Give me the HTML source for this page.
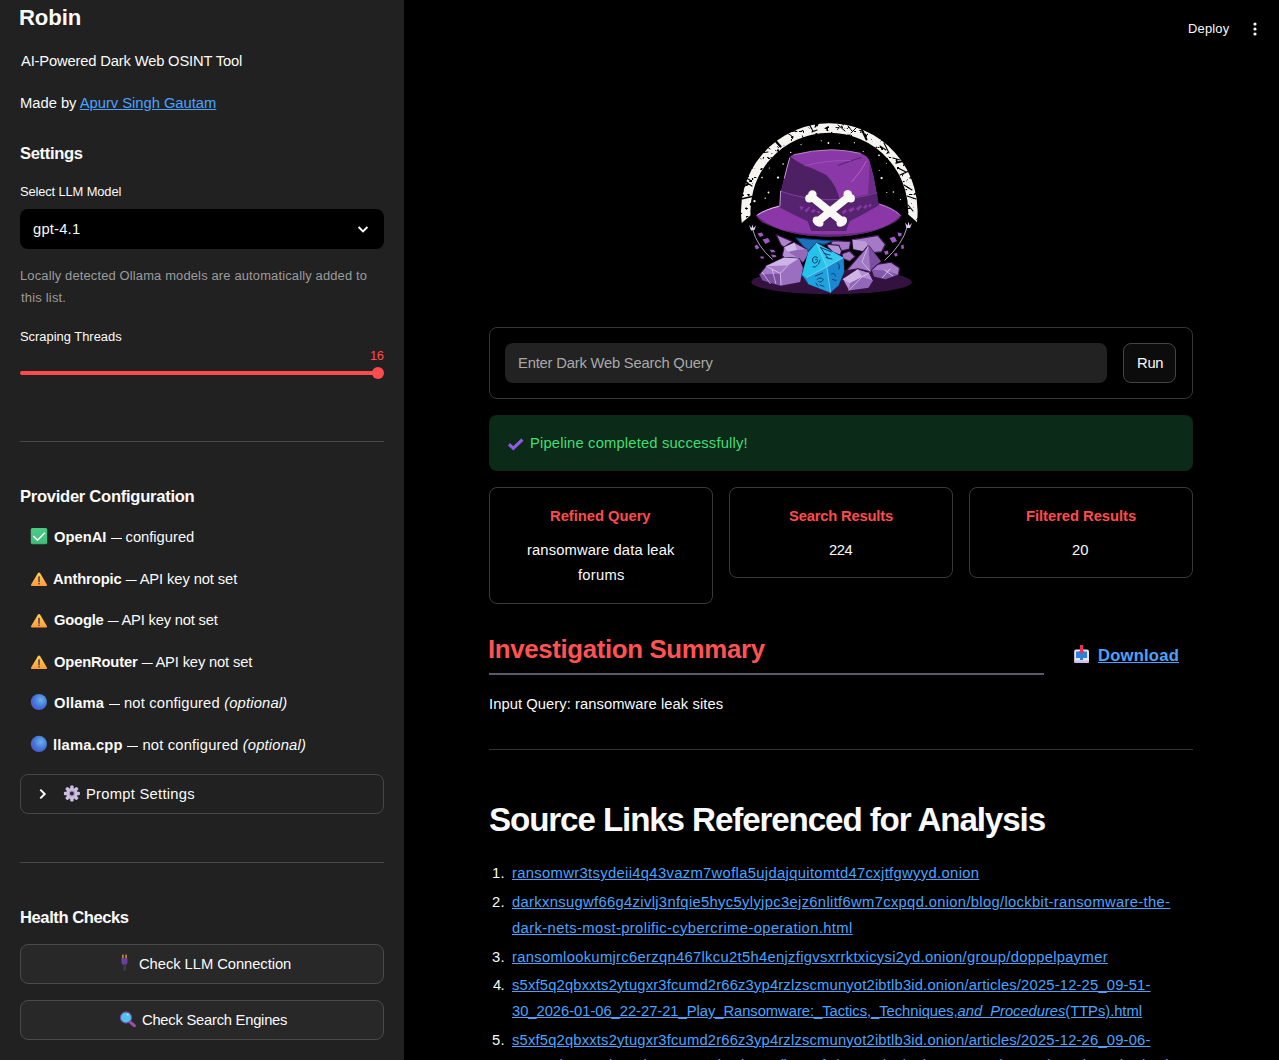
<!DOCTYPE html>
<html lang="en">
<head>
<meta charset="utf-8">
<title>Robin - AI-Powered Dark Web OSINT Tool</title>
<style>
*{box-sizing:border-box;margin:0;padding:0}
html,body{width:1279px;height:1060px;overflow:hidden;background:#000}
body{font-family:"Liberation Sans",sans-serif;color:#fafafa}
#app{position:relative;width:1279px;height:1060px;overflow:hidden;background:#000}
.t{position:absolute;white-space:nowrap;line-height:1;display:block}
.abs{position:absolute}
a{color:#4ba3ff;text-decoration:underline}
#sidebar{left:0;top:0;width:404px;height:1060px;background:#212121}
.hr{height:1px;background:#484848}
.box{border:1px solid #3a3a3a;border-radius:8px}
b{font-weight:700}
.d{display:inline-block;transform:scaleX(.745);margin:0 -1.9px}
i{font-style:italic}

</style>
</head>
<body>
<div id="app">
<div id="sidebar" class="abs"></div>
<!-- select -->
<div class="abs" style="left:20px;top:209px;width:364px;height:40px;background:#000;border-radius:8px"></div>
<svg class="abs" style="left:355px;top:221.6px" width="16" height="16" viewBox="0 0 16 16"><path d="M3.6 5 L8 9.4 L12.4 5" fill="none" stroke="#fafafa" stroke-width="2"/></svg>
<!-- slider -->
<div class="abs" style="left:20px;top:371px;width:358px;height:4px;background:#ff4b4b;border-radius:2px"></div>
<div class="abs" style="left:372px;top:367px;width:12px;height:12px;background:#ff4b4b;border-radius:50%"></div>
<div class="abs hr" style="left:20px;top:441px;width:364px"></div>
<!-- expander -->
<div class="abs box" style="left:20px;top:774px;width:364px;height:40px;border-color:#474747"></div>
<svg class="abs" style="left:35px;top:786px" width="16" height="16" viewBox="0 0 16 16"><path d="M5.3 3.6 L9.7 8 L5.3 12.4" fill="none" stroke="#fafafa" stroke-width="2"/></svg>
<div class="abs hr" style="left:20px;top:862px;width:364px"></div>
<!-- buttons -->
<div class="abs box" style="left:20px;top:944px;width:364px;height:40px;background:#282828;border-color:#4a4a4a"></div>
<div class="abs box" style="left:20px;top:1000px;width:364px;height:40px;background:#282828;border-color:#4a4a4a"></div>
<!-- header dots -->
<svg class="abs" style="left:1247px;top:21px" width="16" height="16" viewBox="0 0 16 16"><circle cx="8" cy="3" r="1.6" fill="#fafafa"/><circle cx="8" cy="8" r="1.6" fill="#fafafa"/><circle cx="8" cy="13" r="1.6" fill="#fafafa"/></svg>
<!-- logo -->
<svg class="abs" style="left:730px;top:110px" width="200" height="200" viewBox="730 110 200 200">
<defs>
<linearGradient id="lgDie" x1="0" y1="0" x2="1" y2="1"><stop offset="0" stop-color="#2fd0ef"/><stop offset="1" stop-color="#1689cf"/></linearGradient>
<filter id="dist" x="-5%" y="-5%" width="110%" height="110%">
<feTurbulence type="fractalNoise" baseFrequency="0.2 0.3" numOctaves="3" seed="11" result="n"/>
<feColorMatrix in="n" type="matrix" values="0 0 0 0 0  0 0 0 0 0  0 0 0 0 0  0 0 0 -14 10.2" result="m"/>
<feComposite in="SourceGraphic" in2="m" operator="in"/>
</filter>
</defs>
<!-- shadow -->
<ellipse cx="831.6" cy="282" rx="80.2" ry="12.2" fill="#33123f"/>
<!-- ring -->
<path d="M746.45 222.7 A83.6 83.6 0 1 1 912.3 221.8" fill="none" stroke="#f6f4f1" stroke-width="9.4" filter="url(#dist)"/>
<path d="M751.6 214.5 L751.6 224 L740.5 224Z M907.2 213.5 L907.2 223.5 L918.5 223.5Z" fill="#000"/>
<!-- ring cracks -->
<g stroke="#000" fill="none" stroke-linecap="round">
<path d="M741 199 L752 196.5" stroke-width="1.6"/>
<path d="M742.5 188 L748 183 M744 181 L752 186 M746 178 L750 180" stroke-width="1.3"/>
<path d="M773 138 L780.5 146.5" stroke-width="2.2"/>
<path d="M766 146 L770 149 M760 153 L768 152" stroke-width="1"/>
<path d="M786 132 L793 137 M790 130.5 L797 131.5" stroke-width="1"/>
<path d="M809 124 L813 131 M815 127 L818 124 M812 132 L817 130" stroke-width="1.2"/>
<path d="M838 125 L845 131 M848 126 L852 131 M856 128 L851 133" stroke-width="1"/>
<path d="M862 130 L866.5 139.5" stroke-width="2"/>
<path d="M880 146 L886 150 M884 143 L889 153" stroke-width="1.1"/>
<path d="M893 158 L900 160 M896 163 L904 161 M898 168 L906 172 M900 175 L909 171" stroke-width="1.3"/>
<path d="M904 185 L912 190 M907 196 L916 199 M908 205 L913 211" stroke-width="1.1"/>
</g>
<!-- stars -->
<g fill="#fff">
<circle cx="821.3" cy="140.8" r="0.6"/><circle cx="828.4" cy="143" r="0.9"/><circle cx="801" cy="144.6" r="0.6"/><circle cx="790.7" cy="152.4" r="0.7"/>
<circle cx="783.1" cy="164" r="0.8"/><circle cx="769.4" cy="168" r="0.6"/><circle cx="778" cy="177.6" r="1.1"/><circle cx="762" cy="177.6" r="0.8"/>
<circle cx="768.5" cy="192.5" r="0.9"/><circle cx="765.2" cy="198.2" r="0.7"/><circle cx="754.5" cy="201.2" r="1.1"/>
<circle cx="839.2" cy="143.3" r="0.5"/><circle cx="854.4" cy="142.7" r="0.6"/><circle cx="863.2" cy="151.5" r="0.6"/><circle cx="879" cy="155.3" r="0.9"/>
<circle cx="881.6" cy="178.1" r="1.1"/><circle cx="886.3" cy="163.3" r="0.5"/><circle cx="879.2" cy="170.4" r="0.5"/><circle cx="893.4" cy="192" r="0.8"/>
<circle cx="886.8" cy="192.5" r="0.6"/><circle cx="900.5" cy="199.6" r="0.6"/>
</g>
<!-- branches -->
<g>
<path d="M752.5 229 Q757 246 772.5 259.5" stroke="#d8c6e8" stroke-width="0.8" fill="none"/>
<path d="M907.5 226 Q903 244 884.5 260.5" stroke="#d8c6e8" stroke-width="0.8" fill="none"/>
<g fill="#9c5cc2">
<path d="M757.5 233.5 L762 232.5 L763.5 235.5 L760 237Z M762.5 239.5 L768 238 L770 241.5 L765.5 244Z M754.5 246 L757 244.5 L759.5 248 L756 249.5Z M769.5 249.5 L774 250 L775.5 252 L771.5 252.5Z M760 256.5 L763.5 256.5 L764 258.5 L761 258.5Z M771 254.5 L775.5 255 L776.5 257 L772.5 257.5Z"/>
<path d="M897.5 232.5 L901.5 233 L901.5 236 L898.5 236.5Z M889.5 238 L894.5 236.5 L897 241 L892.5 243Z M901 245.5 L903.5 244.5 L904 248.5 L901.5 249Z M884 251.5 L888 250.5 L888.5 254 L885.5 255Z M894 253.5 L897 253 L897.5 256 L895 256.5Z"/>
</g>
<path d="M749 225 L751.5 228 L752.5 224.5 L753.5 228 L756 225.5 L754.5 230 L751 230.5Z" fill="#dccdeb"/>
<path d="M905 222.5 L907.5 225.5 L908.5 221.5 L909.5 225.5 L912 223 L910 228 L906.5 228Z" fill="#dccdeb"/>
</g>
<!-- crystals back row -->
<g stroke="#3a1550" stroke-width="1.1" stroke-linejoin="round">
<path d="M776 234.4 L792.5 241.5 L784.1 247.2 L781.2 245.3Z" fill="#a983cb"/>
<path d="M852.4 239.6 L877.8 235.4 L885.4 244.3 L881.6 251.9 L870.3 252.8 L853.3 249.1Z" fill="#a47ac6"/>
<path d="M852.4 239.6 L866 241.5 L870.3 252.8 L853.3 249.1Z" fill="#bb9ad8" stroke="none"/>
<path d="M832.5 240.6 L850.5 241.5 L849.5 249.1 L842 250.9 L830.7 244.3Z" fill="#a47ac6"/>
<!-- hidden die -->
<path d="M796 238 L833 241 L824 244.5 L816.4 243 L808 251.5Z" fill="#1a72b8" stroke="#0f3f7a"/>
<path d="M826.8 244.2 L839 245.4 L841.5 250.9 L840.3 255.2 L832.9 252.2 L828 247.3Z" fill="#b594d4"/>
<path d="M842 253.8 L849.5 250.9 L855.2 256.6 L849.5 261.3 L842.9 258.5Z" fill="#a47ac6"/>
<path d="M782.2 255.7 L784.1 247.2 L794.4 242.5 L806.7 249.1 L808.6 253.8 L802.9 262.3 L799.2 258.5 L784.1 257.5Z" fill="#b48fd4"/>
<path d="M784.1 247.2 L794.4 242.5 L797 250 L788 252Z" fill="#d1b8e8" stroke="none"/>
<path d="M788 252 L797 250 L806.7 249.1 L808.6 253.8 L802.9 262.3 L799.2 258.5Z" fill="#9468b8" stroke="none"/>
<!-- pyramid -->
<path d="M868.4 245.3 L846.2 270.8 L858 268.9 L870.3 271.7 L880.7 261.3Z" fill="#a079c4"/>
<path d="M868.4 245.3 L870.3 271.7 L880.7 261.3Z" fill="#7c4fa2" stroke="none"/>
<path d="M868.4 245.3 L862 262 L870.3 271.7" fill="none" stroke="#e6d8f3" stroke-width="0.6"/>
<!-- bottom right rock -->
<path d="M871.7 269.8 L877.8 264.2 L891 262.3 L899.5 267.9 L898.6 274.5 L885.4 279.2 L874.1 276.4Z" fill="#a67cc8"/>
<path d="M871.7 269.8 L884 270.5 L898.6 274.5 L885.4 279.2 L874.1 276.4Z" fill="#8458aa" stroke="none"/>
<path d="M882 278 L890.5 268.5 M884.5 270 L893 276" stroke="#efe4f8" stroke-width="0.7"/>
<!-- bottom middle rock -->
<path d="M842.5 279.2 L858 268.9 L869.3 272.6 L873.1 280.2 L868.4 287.7 L848.6 290.6Z" fill="#b48fd4"/>
<path d="M842.5 279.2 L858 268.9 L862 277 L850 283Z" fill="#cfb5e6" stroke="none"/>
<path d="M850 283 L862 277 L873.1 280.2 L868.4 287.7 L848.6 290.6Z" fill="#9468b8" stroke="none"/>
<path d="M848.6 290.6 L862 277 L869.3 272.6" fill="none" stroke="#efe4f8" stroke-width="0.6"/>
<!-- large bottom-left -->
<path d="M759.5 274.5 L766.1 266 L784.1 257.5 L799.2 258.5 L802.9 267.9 L800.1 282.1 L780.3 285.8 L762.4 280.2Z" fill="#a67cc8"/>
<path d="M766.1 266 L784.1 257.5 L799.2 258.5 L788 265.5Z" fill="#ceb3e6" stroke="none"/>
<path d="M759.5 274.5 L780.3 273.5 L780.3 285.8 L762.4 280.2Z" fill="#7d4fa3" stroke="none"/>
<path d="M780.3 273.5 L788 265.5 L799.2 258.5 L802.9 267.9 L800.1 282.1 L780.3 285.8Z" fill="#9a6fc0" stroke="none"/>
<path d="M762 272 L770.5 284 M766.1 266 L780.3 273.5 L788 265.5 M780.3 273.5 L781 285 M772 269 L776 284" fill="none" stroke="#efe4f8" stroke-width="0.6"/>
</g>
<!-- die -->
<g stroke-linejoin="round">
<path d="M816.4 243 L843.3 257.7 L844 271.8 L838.4 285.3 L830.5 292.6 L808.4 284 L802 274.9 L808.4 252.2Z" fill="#1c9bdc" stroke="#0d4f95" stroke-width="0.9"/>
<path d="M816.4 243 L808.4 252.2 L802 274.9 L806.5 277.5 L826.8 266.9Z" fill="#25c2ea"/>
<path d="M816.4 243 L843.3 257.7 L826.8 266.9Z" fill="#36cbee"/>
<path d="M843.3 257.7 L844 271.8 L838.4 285.3 L831 291.8 L826.8 266.9Z" fill="#1a88cf"/>
<path d="M826.8 266.9 L806.5 277.5 L808.4 284 L830.5 292.6Z" fill="#1ea3df"/>
<path d="M816.4 243 L826.8 266.9 L806.5 277.5 M826.8 266.9 L843.3 257.7 M826.8 266.9 L830.5 292.6" fill="none" stroke="#9fe6f8" stroke-width="0.6"/>
<g fill="none" stroke="#143a78" stroke-width="1" stroke-linecap="round">
<path d="M817.5 257.5 Q813 255 812.5 260 Q813 265 817 262 Q819 258.5 815.5 259.5 M818.5 264 L820 260 M813 267 Q816 268 817.5 265"/>
<path d="M820.5 247.5 L828.5 259 M820.5 247.5 L831.5 252 M824 253.5 L830 255 M826 257.5 L832 259"/>
<path d="M815.5 276 L822.5 273 M817 279.5 Q820 276.5 823.5 279.5 Q821 283.5 818.5 281.5 M820 285 L824 286.5 M816 283 L818 286"/>
<path d="M831.5 274 Q834.5 272 835.5 276 M832.5 279.5 L836 280.5 M838 263 Q840.5 265.5 839 269"/>
</g>
</g>
<!-- hat brim -->
<path d="M756 215.6 Q765 208.5 779.4 205.4 L878.8 203.2 Q893 207 901.4 215.4 Q881 236 829 236.6 Q778 236.2 756 215.6Z" fill="#8b37a8"/>
<path d="M756 215.6 Q778 236.2 829 236.6 Q881 236 901.4 215.4 Q899.5 219.3 895 222.3 Q873 234.2 829 234.6 Q785 234.3 762.5 222.6 Q758 219.6 756 215.6Z" fill="#63277c"/>
<path d="M757.3 215 Q766 209.3 779 206.3" fill="none" stroke="#e9d2f2" stroke-width="0.9"/>
<path d="M879.5 204.3 Q892 208 899.5 214.6" fill="none" stroke="#c79ad9" stroke-width="0.7"/>
<!-- crown -->
<path d="M781 191.5 Q785.5 172 789.4 158.5 Q790.2 155.5 793.5 154.8 Q812 150 832 149.7 Q848 150.3 860.8 153.4 Q867.5 155.5 869.4 160.6 Q874.5 177 876.6 193 Q829 210 781 191.5Z" fill="#8a37a7"/>
<path d="M790 156.3 Q786 171 781 191.5 Q805 201 839.5 199.5 Q837 186 826.5 175.2 Q816 169.8 808.5 167 Q797 162.5 790 156.3Z" fill="#4d2063"/>
<path d="M869.6 163 Q874.5 178 876.4 192.5 L868 196 Q869 178 869.6 163Z" fill="#6d2c88"/>
<path d="M838 165.5 Q852 160 861.5 157.5" fill="none" stroke="#5a2472" stroke-width="1.2"/>
<path d="M804.5 166 Q825 160 851 160.5" fill="none" stroke="#a95fc2" stroke-width="0.6"/>
<path d="M851.5 182 Q861 172 866.5 161" fill="none" stroke="#b77bcc" stroke-width="0.7"/>
<path d="M789.8 157.5 Q786.5 169 784.3 178.5" fill="none" stroke="#d9b6e6" stroke-width="0.8"/>
<path d="M793.5 154.8 Q812 150 832 149.7 Q848 150.3 860.8 153.4" fill="none" stroke="#d9b6e6" stroke-width="0.7"/>
<!-- band -->
<path d="M780.3 190.3 Q804 198.8 830 198.8 Q856 198.8 876.9 191.7 L878.8 205.3 Q866 213 849.7 221.3 L846 231.1 L811.3 231.1 L807.5 221.3 Q793.5 214.7 779.4 207.2Z" fill="#562370"/>
<path d="M780.4 191.2 Q804 199.7 830 199.7 Q856 199.7 876.9 192.6" fill="none" stroke="#7f3d9a" stroke-width="1"/>
<path d="M780.6 191 L779.9 206.5" fill="none" stroke="#d9b6e6" stroke-width="0.8"/>
<g fill="#8b37a8">
<path d="M799.5 205.5 L804 207.5 L801 210.5Z M804.5 210.5 L809 206.5 L810.5 207.5 L806.5 212.5Z M810.5 211 L814 209 L816 211 L812.5 213Z M816.5 211.5 L819 210.5 L820.5 212.5 L818 213.5Z"/>
<path d="M842 211.5 L846 209 L847 211.5 L843 214.5Z M848.5 209.5 L853.5 207 L854.5 209.5 L850 212.5Z M856 208.5 L860.5 205 L862 206.5 L858 211Z M863 207.5 L866 204.5 L867.5 205.5 L865.5 209Z M868 206 L870.5 203.5 L871.5 204.5 L870 207.5Z"/>
</g>
<!-- crossbones -->
<g stroke="#faf8f5" stroke-width="7.8" stroke-linecap="round">
<path d="M811.5 196.8 L842.5 221.8"/>
<path d="M848.6 196.8 L817.5 221.8"/>
</g>
<g fill="#faf8f5">
<circle cx="812.4" cy="194.5" r="4.2"/><circle cx="809.3" cy="198.4" r="4.1"/>
<circle cx="847.7" cy="194.3" r="4.2"/><circle cx="850.8" cy="198.4" r="4.1"/>
<circle cx="816.3" cy="220.2" r="3.6"/><circle cx="819.8" cy="223.2" r="3.6"/>
<circle cx="843.3" cy="220.2" r="3.6"/><circle cx="840.2" cy="223.2" r="3.6"/>
</g>
</svg>

<!-- form -->
<div class="abs box" style="left:489px;top:327px;width:704px;height:72px;border-color:#353535"></div>
<div class="abs" style="left:505px;top:343px;width:602px;height:40px;background:#222;border-radius:8px"></div>
<div class="abs box" style="left:1123px;top:343px;width:53px;height:40px;background:#0c0c0c;border-color:#444"></div>
<!-- alert -->
<div class="abs" style="left:489px;top:415px;width:704px;height:56px;background:#0c2a18;border-radius:8px"></div>
<!-- cards -->
<div class="abs box" style="left:489px;top:487px;width:224px;height:117px;border-color:#3a3a3a"></div>
<div class="abs box" style="left:729px;top:487px;width:224px;height:91px;border-color:#3a3a3a"></div>
<div class="abs box" style="left:969px;top:487px;width:224px;height:91px;border-color:#3a3a3a"></div>
<!-- heading underline -->
<div class="abs" style="left:489px;top:673px;width:555px;height:2px;background:#5a5a6a"></div>
<div class="abs hr" style="left:489px;top:749px;width:704px;background:#343434"></div>

<svg class="abs" style="left:0;top:0" width="404" height="1060" viewBox="0 0 404 1060">
<defs>
<linearGradient id="gw" x1="0" y1="0" x2="0" y2="1"><stop offset="0" stop-color="#ffd24f"/><stop offset="1" stop-color="#ff9a3e"/></linearGradient>
<radialGradient id="gb" cx="0.62" cy="0.38" r="0.7"><stop offset="0" stop-color="#6fb0ee"/><stop offset="0.6" stop-color="#4277d6"/><stop offset="1" stop-color="#5650d4"/></radialGradient>
<linearGradient id="gg" x1="0" y1="0" x2="0" y2="1"><stop offset="0" stop-color="#4bcb86"/><stop offset="0.9" stop-color="#3fbf7c"/><stop offset="1" stop-color="#34a86c"/></linearGradient>
</defs>
<!-- check box -->
<rect x="30.8" y="528" width="16.4" height="16.2" rx="1.6" fill="url(#gg)"/>
<path d="M33.6 536.4 L37.5 540.2 L44.4 533.3" fill="none" stroke="#fff" stroke-width="1.5" stroke-linecap="round" stroke-linejoin="round"/>
<!-- warnings -->
<g id="warn1">
<path d="M39 572.4 Q39.8 572.4 40.2 573.2 L46.9 584.6 Q47.5 586 46.2 586 L31.8 586 Q30.5 586 31.1 584.6 L37.8 573.2 Q38.2 572.4 39 572.4Z" fill="url(#gw)"/>
<rect x="38.2" y="576.2" width="1.7" height="6" rx="0.5" fill="#5b4a45"/><rect x="38.2" y="583" width="1.7" height="1.6" rx="0.5" fill="#5b4a45"/>
</g>
<g transform="translate(0 41.5)">
<path d="M39 572.4 Q39.8 572.4 40.2 573.2 L46.9 584.6 Q47.5 586 46.2 586 L31.8 586 Q30.5 586 31.1 584.6 L37.8 573.2 Q38.2 572.4 39 572.4Z" fill="url(#gw)"/>
<rect x="38.2" y="576.2" width="1.7" height="6" rx="0.5" fill="#5b4a45"/><rect x="38.2" y="583" width="1.7" height="1.6" rx="0.5" fill="#5b4a45"/>
</g>
<g transform="translate(0 83)">
<path d="M39 572.4 Q39.8 572.4 40.2 573.2 L46.9 584.6 Q47.5 586 46.2 586 L31.8 586 Q30.5 586 31.1 584.6 L37.8 573.2 Q38.2 572.4 39 572.4Z" fill="url(#gw)"/>
<rect x="38.2" y="576.2" width="1.7" height="6" rx="0.5" fill="#5b4a45"/><rect x="38.2" y="583" width="1.7" height="1.6" rx="0.5" fill="#5b4a45"/>
</g>
<!-- blue circles -->
<circle cx="38.9" cy="702" r="8.1" fill="url(#gb)"/>
<circle cx="38.9" cy="743.9" r="8.1" fill="url(#gb)"/>
<!-- gear -->
<g transform="translate(71.9 793.5)" fill="#cdbfe0">
<g id="teeth"><rect x="-1.7" y="-8" width="3.4" height="16" rx="1"/><rect x="-8" y="-1.7" width="16" height="3.4" rx="1"/></g>
<g transform="rotate(45)"><rect x="-1.7" y="-8" width="3.4" height="16" rx="1"/><rect x="-8" y="-1.7" width="16" height="3.4" rx="1"/></g>
<circle r="5.6"/>
<circle r="3.3" fill="#b4a3ca"/>
<circle r="1.9" fill="#2a2630"/>
</g>
<!-- plug -->
<rect x="122.1" y="954.6" width="1.5" height="4" fill="#d8913c"/><rect x="125.3" y="954.6" width="1.5" height="4" fill="#d8913c"/>
<path d="M121.4 958.2 H127.5 V961.5 Q127.5 964.5 125.9 964.8 H123 Q121.4 964.5 121.4 961.5Z" fill="#6a3fa3"/>
<rect x="123.3" y="964.5" width="2.6" height="6.3" rx="0.8" fill="#41374b"/>
<!-- magnifier -->
<path d="M129.6 1021.6 L134.3 1025.6" stroke="#9a4fa9" stroke-width="3.2" stroke-linecap="round"/>
<circle cx="126" cy="1017.5" r="5.6" fill="#4fc4f1" stroke="#7b459f" stroke-width="1.1"/>
<circle cx="127.8" cy="1014.6" r="0.9" fill="#c9eefb"/>
</svg>
<!-- success check -->
<svg class="abs" style="left:500px;top:430px" width="32" height="28" viewBox="500 430 32 28"><path d="M508.9 444.3 L513.3 448.3 L522.4 439.6" fill="none" stroke="#9158ea" stroke-width="3.1" stroke-linejoin="miter"/><path d="M509.6 443.5 L513.4 447 L521.6 439.2" fill="none" stroke="#8a6fc4" stroke-width="1" opacity=".8"/></svg>
<!-- inbox -->
<svg class="abs" style="left:1070px;top:640px" width="24" height="28" viewBox="1070 640 24 28">
<rect x="1074.2" y="649.4" width="14.8" height="13.6" rx="2" fill="#ebe5f2"/>
<rect x="1074.2" y="660.6" width="14.8" height="2.4" rx="1" fill="#d3bdea"/>
<path d="M1076 651.5 H1087 V658 H1083 V660 H1080 V658 H1076Z" fill="#2f80d8"/>
<path d="M1080 645.1 H1083.1 V651 H1084.4 L1081.5 654.2 L1078.8 651 H1080Z" fill="#ea2f5c"/>
</svg>

<aside>
<h1 class="t" style="left:19.00px;top:7.00px;font-size:22.13px;font-weight:700;color:#fafafa;letter-spacing:-0.125px;">Robin</h1>
<p class="t" style="left:21.00px;top:54.25px;font-size:14.75px;font-weight:400;color:#fafafa;letter-spacing:-0.172px;">AI-Powered Dark Web OSINT Tool</p>
<span class="t" style="left:20.00px;top:95.50px;font-size:14.75px;font-weight:400;color:#fafafa;letter-spacing:-0.020px;">Made by <a>Apurv Singh Gautam</a></span>
<h3 class="t" style="left:20.00px;top:146.00px;font-size:16.6px;font-weight:700;color:#fafafa;letter-spacing:-0.357px;">Settings</h3>
<span class="t" style="left:20.00px;top:186.25px;font-size:12.91px;font-weight:400;color:#fafafa;letter-spacing:-0.133px;">Select LLM Model</span>
<span class="t" style="left:33.00px;top:222.00px;font-size:14.75px;font-weight:400;color:#fafafa;letter-spacing:0.200px;">gpt-4.1</span>
<span class="t" style="left:20.00px;top:270.00px;font-size:12.91px;font-weight:400;color:#9c9c9c;letter-spacing:0.161px;">Locally detected Ollama models are automatically added to</span>
<span class="t" style="left:21.00px;top:292.00px;font-size:12.91px;font-weight:400;color:#9c9c9c;letter-spacing:0.211px;">this list.</span>
<span class="t" style="left:20.00px;top:331.25px;font-size:12.91px;font-weight:400;color:#fafafa;letter-spacing:0.000px;">Scraping Threads</span>
<span class="t" style="left:370.00px;top:350.00px;font-size:12.91px;font-weight:400;color:#ff4b4b;letter-spacing:-0.500px;">16</span>
<h3 class="t" style="left:20.00px;top:488.75px;font-size:16.6px;font-weight:700;color:#fafafa;letter-spacing:-0.286px;">Provider Configuration</h3>
<span class="t" style="left:54.00px;top:529.75px;font-size:14.75px;font-weight:400;color:#fafafa;letter-spacing:-0.014px;"><b>OpenAI</b> <span class="d">—</span> configured</span>
<span class="t" style="left:53.00px;top:571.50px;font-size:14.75px;font-weight:400;color:#fafafa;letter-spacing:-0.115px;"><b>Anthropic</b> <span class="d">—</span> API key not set</span>
<span class="t" style="left:54.00px;top:613.00px;font-size:14.75px;font-weight:400;color:#fafafa;letter-spacing:-0.196px;"><b>Google</b> <span class="d">—</span> API key not set</span>
<span class="t" style="left:54.00px;top:654.75px;font-size:14.75px;font-weight:400;color:#fafafa;letter-spacing:-0.167px;"><b>OpenRouter</b> <span class="d">—</span> API key not set</span>
<span class="t" style="left:54.00px;top:695.75px;font-size:14.75px;font-weight:400;color:#fafafa;letter-spacing:0.174px;"><b>Ollama</b> <span class="d">—</span> not configured <i>(optional)</i></span>
<span class="t" style="left:53.00px;top:737.50px;font-size:14.75px;font-weight:400;color:#fafafa;letter-spacing:0.181px;"><b>llama.cpp</b> <span class="d">—</span> not configured <i>(optional)</i></span>
<span class="t" style="left:86.00px;top:786.75px;font-size:14.75px;font-weight:400;color:#fafafa;letter-spacing:0.268px;">Prompt Settings</span>
<h3 class="t" style="left:20.00px;top:910.00px;font-size:16.6px;font-weight:700;color:#fafafa;letter-spacing:-0.438px;">Health Checks</h3>
<span class="t" style="left:139.00px;top:956.75px;font-size:14.75px;font-weight:400;color:#fafafa;letter-spacing:-0.053px;">Check LLM Connection</span>
<span class="t" style="left:142.00px;top:1013.20px;font-size:14.75px;font-weight:400;color:#fafafa;letter-spacing:-0.242px;">Check Search Engines</span>
</aside>
<main>
<span class="t" style="left:1188.00px;top:23.00px;font-size:12.91px;font-weight:400;color:#fafafa;letter-spacing:0.200px;">Deploy</span>
<span class="t" style="left:518.00px;top:356.00px;font-size:14.75px;font-weight:400;color:#a9a9a9;letter-spacing:-0.192px;">Enter Dark Web Search Query</span>
<span class="t" style="left:1137.00px;top:356.00px;font-size:14.75px;font-weight:400;color:#fafafa;letter-spacing:-0.250px;">Run</span>
<span class="t" style="left:530.00px;top:436.00px;font-size:14.75px;font-weight:400;color:#44dc75;letter-spacing:0.169px;">Pipeline completed successfully!</span>
<span class="t" style="left:550.00px;top:508.75px;font-size:14.75px;font-weight:700;color:#ff4b4b;letter-spacing:-0.021px;">Refined Query</span>
<span class="t" style="left:527.00px;top:543.00px;font-size:14.75px;font-weight:400;color:#fafafa;letter-spacing:0.118px;">ransomware data leak</span>
<span class="t" style="left:578.00px;top:568.00px;font-size:14.75px;font-weight:400;color:#fafafa;letter-spacing:0.250px;">forums</span>
<span class="t" style="left:789.00px;top:508.75px;font-size:14.75px;font-weight:700;color:#ff4b4b;letter-spacing:-0.192px;">Search Results</span>
<span class="t" style="left:829.00px;top:543.00px;font-size:14.75px;font-weight:400;color:#fafafa;letter-spacing:-0.500px;">224</span>
<span class="t" style="left:1026.00px;top:508.75px;font-size:14.75px;font-weight:700;color:#ff4b4b;letter-spacing:-0.033px;">Filtered Results</span>
<span class="t" style="left:1072.00px;top:543.00px;font-size:14.75px;font-weight:400;color:#fafafa;letter-spacing:0.000px;">20</span>
<h2 class="t" style="left:488.00px;top:636.50px;font-size:25.82px;font-weight:700;color:#ff5252;letter-spacing:-0.350px;">Investigation Summary</h2>
<span class="t" style="left:1098.00px;top:648.00px;font-size:16.6px;font-weight:700;color:#fafafa;letter-spacing:0.214px;"><a>Download</a></span>
<p class="t" style="left:489.00px;top:696.75px;font-size:14.75px;font-weight:400;color:#fafafa;letter-spacing:0.061px;">Input Query: ransomware leak sites</p>
<h2 class="t" style="left:489.00px;top:802.50px;font-size:33.19px;font-weight:700;color:#fafafa;letter-spacing:-1.114px;">Source Links Referenced for Analysis</h2>
<span class="t" style="left:492.00px;top:866.00px;font-size:14.75px;font-weight:400;color:#fafafa;letter-spacing:0.250px;">1.</span>
<span class="t" style="left:512.00px;top:866.00px;font-size:14.75px;font-weight:400;color:#fafafa;letter-spacing:0.344px;"><a>ransomwr3tsydeii4q43vazm7wofla5ujdajquitomtd47cxjtfgwyyd.onion</a></span>
<span class="t" style="left:492.00px;top:894.50px;font-size:14.75px;font-weight:400;color:#fafafa;letter-spacing:0.250px;">2.</span>
<span class="t" style="left:512.00px;top:894.50px;font-size:14.75px;font-weight:400;color:#fafafa;letter-spacing:0.333px;"><a>darkxnsugwf66g4zivlj3nfqie5hyc5ylyjpc3ejz6nlitf6wm7cxpqd.onion/blog/lockbit-ransomware-the-</a></span>
<span class="t" style="left:512.00px;top:920.50px;font-size:14.75px;font-weight:400;color:#fafafa;letter-spacing:0.396px;"><a>dark-nets-most-prolific-cybercrime-operation.html</a></span>
<span class="t" style="left:492.00px;top:949.50px;font-size:14.75px;font-weight:400;color:#fafafa;letter-spacing:0.250px;">3.</span>
<span class="t" style="left:512.00px;top:949.50px;font-size:14.75px;font-weight:400;color:#fafafa;letter-spacing:0.312px;"><a>ransomlookumjrc6erzqn467lkcu2t5h4enjzfigvsxrrktxicysi2yd.onion/group/doppelpaymer</a></span>
<span class="t" style="left:493.00px;top:977.75px;font-size:14.75px;font-weight:400;color:#fafafa;letter-spacing:-0.750px;">4.</span>
<span class="t" style="left:512.00px;top:977.75px;font-size:14.75px;font-weight:400;color:#fafafa;letter-spacing:0.182px;"><a>s5xf5q2qbxxts2ytugxr3fcumd2r66z3yp4rzlzscmunyot2ibtlb3id.onion/articles/2025-12-25_09-51-</a></span>
<span class="t" style="left:512.00px;top:1004.00px;font-size:14.75px;font-weight:400;color:#fafafa;letter-spacing:-0.036px;"><a>30_2026-01-06_22-27-21_Play_Ransomware:_Tactics,_Techniques,<i>and_Procedures</i>(TTPs).html</a></span>
<span class="t" style="left:492.00px;top:1032.50px;font-size:14.75px;font-weight:400;color:#fafafa;letter-spacing:0.250px;">5.</span>
<span class="t" style="left:512.00px;top:1032.50px;font-size:14.75px;font-weight:400;color:#fafafa;letter-spacing:0.182px;"><a>s5xf5q2qbxxts2ytugxr3fcumd2r66z3yp4rzlzscmunyot2ibtlb3id.onion/articles/2025-12-26_09-06-</a></span>
<span class="t" style="left:512.00px;top:1058.00px;font-size:14.75px;font-weight:400;color:#fafafa;letter-spacing:-0.424px;"><a>14_Evolve_Backward_Trust_Hack_The_Fallout_of_the_Leaked_Bit_Data_Analyses_Through_Spring.html</a></span>
</main>
</div>
</body>
</html>
